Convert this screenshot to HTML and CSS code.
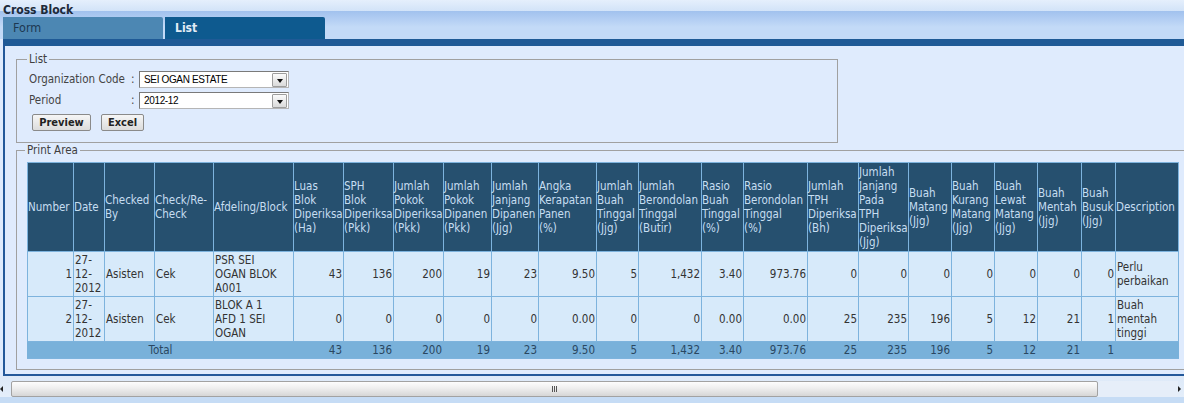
FILE: index.html
```html
<!DOCTYPE html>
<html>
<head>
<meta charset="utf-8">
<title>Cross Block</title>
<link rel="stylesheet" href="styles.css">
</head>
<body>
<div class="header">
  <div class="title">Cross Block</div>
  <div class="tabs">
    <div class="tab">Form</div>
    <div class="tab active">List</div>
  </div>
</div>
<div class="panel">
  <fieldset class="fs fs-list">
    <legend>List</legend>
    <div class="form-grid">
      <span class="lbl">Organization Code</span><span class="colon">:</span>
      <div class="combo"><span class="combo-text">SEI OGAN ESTATE</span><span class="combo-btn"></span></div>
      <span class="lbl">Period</span><span class="colon">:</span>
      <div class="combo"><span class="combo-text">2012-12</span><span class="combo-btn"></span></div>
    </div>
    <div class="buttons">
      <button class="btn">Preview</button>
      <button class="btn">Excel</button>
    </div>
  </fieldset>
  <fieldset class="fs fs-print">
    <legend>Print Area</legend>
    <table class="grid">
      <colgroup>
        <col style="width:46px"><col style="width:31px"><col style="width:50px"><col style="width:59px"><col style="width:80px">
        <col style="width:50px"><col style="width:50px"><col style="width:50px"><col style="width:48px"><col style="width:47px">
        <col style="width:58px"><col style="width:42px"><col style="width:63px"><col style="width:42px"><col style="width:64px">
        <col style="width:51px"><col style="width:50px"><col style="width:43px"><col style="width:43px"><col style="width:43px">
        <col style="width:44px"><col style="width:34px"><col style="width:63px">
      </colgroup>
      <thead>
        <tr>
          <th>Number</th>
          <th>Date</th>
          <th>Checked<br>By</th>
          <th>Check/Re-<br>Check</th>
          <th>Afdeling/Block</th>
          <th>Luas<br>Blok<br>Diperiksa<br>(Ha)</th>
          <th>SPH<br>Blok<br>Diperiksa<br>(Pkk)</th>
          <th>Jumlah<br>Pokok<br>Diperiksa<br>(Pkk)</th>
          <th>Jumlah<br>Pokok<br>Dipanen<br>(Pkk)</th>
          <th>Jumlah<br>Janjang<br>Dipanen<br>(Jjg)</th>
          <th>Angka<br>Kerapatan<br>Panen<br>(%)</th>
          <th>Jumlah<br>Buah<br>Tinggal<br>(Jjg)</th>
          <th>Jumlah<br>Berondolan<br>Tinggal<br>(Butir)</th>
          <th>Rasio<br>Buah<br>Tinggal<br>(%)</th>
          <th>Rasio<br>Berondolan<br>Tinggal<br>(%)</th>
          <th>Jumlah<br>TPH<br>Diperiksa<br>(Bh)</th>
          <th>Jumlah<br>Janjang<br>Pada<br>TPH<br>Diperiksa<br>(Jjg)</th>
          <th>Buah<br>Matang<br>(Jjg)</th>
          <th>Buah<br>Kurang<br>Matang<br>(Jjg)</th>
          <th>Buah<br>Lewat<br>Matang<br>(Jjg)</th>
          <th>Buah<br>Mentah<br>(Jjg)</th>
          <th>Buah<br>Busuk<br>(Jjg)</th>
          <th>Description</th>
        </tr>
      </thead>
      <tbody>
        <tr>
          <td class="n">1</td>
          <td>27-<br>12-<br>2012</td>
          <td>Asisten</td>
          <td>Cek</td>
          <td>PSR SEI<br>OGAN BLOK<br>A001</td>
          <td class="n">43</td><td class="n">136</td><td class="n">200</td><td class="n">19</td><td class="n">23</td>
          <td class="n">9.50</td><td class="n">5</td><td class="n">1,432</td><td class="n">3.40</td><td class="n">973.76</td>
          <td class="n">0</td><td class="n">0</td><td class="n">0</td><td class="n">0</td><td class="n">0</td>
          <td class="n">0</td><td class="n">0</td>
          <td>Perlu<br>perbaikan</td>
        </tr>
        <tr>
          <td class="n">2</td>
          <td>27-<br>12-<br>2012</td>
          <td>Asisten</td>
          <td>Cek</td>
          <td>BLOK A 1<br>AFD 1 SEI<br>OGAN</td>
          <td class="n">0</td><td class="n">0</td><td class="n">0</td><td class="n">0</td><td class="n">0</td>
          <td class="n">0.00</td><td class="n">0</td><td class="n">0</td><td class="n">0.00</td><td class="n">0.00</td>
          <td class="n">25</td><td class="n">235</td><td class="n">196</td><td class="n">5</td><td class="n">12</td>
          <td class="n">21</td><td class="n">1</td>
          <td>Buah<br>mentah<br>tinggi</td>
        </tr>
      </tbody>
      <tfoot>
        <tr>
          <td colspan="5" class="c">Total</td>
          <td class="n">43</td><td class="n">136</td><td class="n">200</td><td class="n">19</td><td class="n">23</td>
          <td class="n">9.50</td><td class="n">5</td><td class="n">1,432</td><td class="n">3.40</td><td class="n">973.76</td>
          <td class="n">25</td><td class="n">235</td><td class="n">196</td><td class="n">5</td><td class="n">12</td>
          <td class="n">21</td><td class="n">1</td>
          <td></td>
        </tr>
      </tfoot>
    </table>
  </fieldset>
</div>
<div class="hscroll">
  <span class="arr arr-left"></span>
  <div class="thumb"><span class="grip"></span></div>
  <div class="track"></div>
  <span class="arr arr-right"></span>
</div>
<div class="footer-strip"></div>
</body>
</html>
```

FILE: styles.css
```css
html, body {
  margin: 0;
  padding: 0;
  overflow: hidden;
  width: 1184px;
  height: 403px;
  background: #dfebfd;
  font-family: "DejaVu Sans Condensed", "DejaVu Sans", sans-serif;
  font-size: 11.5px;
  color: #3a3a3a;
}

.header {
  height: 39px;
  background: linear-gradient(to bottom, #e5effc 0, #d2e3f8 11px, #a1c1ee 11px, #c3daf7 27px, #c3daf7 39px);
  display: flex;
  flex-direction: column;
}

.title {
  font-weight: bold;
  font-size: 12px;
  line-height: 14px;
  padding: 3px 0 0 3px;
  color: #1d2a3a;
  height: 14px;
}

.tabs {
  display: flex;
  padding-left: 3px;
  gap: 2px;
  height: 22px;
}

.tab {
  width: 160px;
  height: 22px;
  line-height: 22px;
  padding-left: 10px;
  box-sizing: border-box;
  background: #4c87b3;
  color: #1d3852;
  font-size: 12.5px;
  border-top-right-radius: 2px;
}

.tab.active {
  background: #0e5a8f;
  color: #e2ecf6;
  font-weight: bold;
  font-size: 12px;
}

.panel {
  margin-left: 3px;
  border-top: 7px solid #1f5a96;
  border-left: 2px solid #23589a;
  border-bottom: 2px solid #23589a;
  background: #dfebfd;
  overflow: hidden;
  padding-bottom: 4px;
}

.fs {
  border: 1px solid #a0a0a0;
  margin: 0 0 0 11px;
  padding: 0 10px;
  min-width: 0;
}

.fs legend {
  padding: 0 2px;
  margin-left: -2px;
  line-height: 14px;
  font-size: 11.5px;
  color: #3f3f3f;
}

.fs-list {
  margin-top: 6px;
  width: 798px;
  padding: 5px 10px 11px 12px;
}

.form-grid {
  display: grid;
  grid-template-columns: 102px 8px 150px;
  row-gap: 4px;
  align-items: center;
}

.lbl, .colon {
  color: #444;
  line-height: 17px;
}

.combo {
  width: 150px;
  height: 17px;
  box-sizing: border-box;
  border: 1px solid #7a7a7a;
  border-right-color: #b5b5b5;
  border-bottom-color: #b5b5b5;
  background: #fff;
  display: flex;
  align-items: center;
  justify-content: space-between;
}

.combo-text {
  padding-left: 4px;
  font-family: "Liberation Sans", Arial, sans-serif;
  font-size: 10px;
  letter-spacing: -0.35px;
  color: #000;
}

.combo-btn {
  width: 15px;
  height: 14px;
  margin-right: 1px;
  box-sizing: border-box;
  border: 1px solid #9d9d9d;
  border-radius: 1px;
  background: linear-gradient(to bottom, #fbfbfb, #dadada);
  display: flex;
  align-items: center;
  justify-content: center;
}

.combo-btn::after {
  content: "";
  width: 0;
  height: 0;
  margin-top: 2px;
  border-left: 3px solid transparent;
  border-right: 3px solid transparent;
  border-top: 4px solid #111;
}

.buttons {
  display: flex;
  gap: 10px;
  margin-top: 5px;
  padding-left: 3px;
}

.btn {
  height: 17px;
  padding: 0 5px;
  margin: 0;
  font-family: "DejaVu Sans Condensed", "DejaVu Sans", sans-serif;
  font-weight: bold;
  font-size: 11px;
  line-height: 15px;
  color: #222;
  border: 1px solid #8a8a8a;
  border-radius: 2px;
  background: linear-gradient(to bottom, #f6f6f6, #dcdcdc);
}

.btn:first-child {
  width: 59px;
}

.btn:last-child {
  width: 43px;
}

.fs-print {
  width: 1200px;
  padding: 5px 10px 10px 10px;
}

.grid {
  table-layout: fixed;
  border-collapse: collapse;
  width: 1152px;
  border: 1px solid #7db3dd;
  font-size: 11.5px;
}

.grid th, .grid td {
  border: 1px solid #7db3dd;
  padding: 1px;
  line-height: 14px;
  vertical-align: middle;
  white-space: nowrap;
}

.grid th {
  background: #26506f;
  color: #c6def2;
  font-weight: normal;
  text-align: left;
  padding: 2px 0;
}

.grid tbody td {
  background: #d7eafa;
  color: #333;
  text-align: left;
}

.grid td.n {
  text-align: right;
}

.grid tfoot td {
  background: #79b1da;
  color: #2a4761;
  border-color: #79b1da;
  border-bottom-color: #7db3dd;
}

.grid tfoot td.c {
  text-align: center;
}

.hscroll {
  display: flex;
  align-items: flex-start;
  height: 21px;
  box-sizing: border-box;
  padding-top: 5px;
  background: linear-gradient(to bottom, #dde9f8, #e4eefa);
}

.arr {
  width: 11px;
  height: 16px;
  display: flex;
  align-items: center;
  flex: 0 0 auto;
}

.arr-left::before {
  content: "";
  border-top: 3px solid transparent;
  border-bottom: 3px solid transparent;
  border-right: 3px solid #222;
}

.arr-right {
  width: 6px;
}

.arr-right::before {
  content: "";
  border-top: 3px solid transparent;
  border-bottom: 3px solid transparent;
  border-left: 3px solid #222;
}

.thumb {
  flex: 0 0 1087px;
  height: 16px;
  box-sizing: border-box;
  border: 1px solid #a2a2a2;
  border-radius: 2px;
  background: linear-gradient(to bottom, #fdfdfd 0, #eeeeee 45%, #d6d6d6 100%);
  display: flex;
  align-items: center;
  justify-content: center;
}

.grip {
  width: 5px;
  height: 6px;
  background: repeating-linear-gradient(to right, #555 0, #555 1px, transparent 1px, transparent 2px);
}

.track {
  flex: 1 1 auto;
  height: 16px;
  background: #e6eef9;
}

.footer-strip {
  height: 6px;
  background: #c6dcf5;
}
```
